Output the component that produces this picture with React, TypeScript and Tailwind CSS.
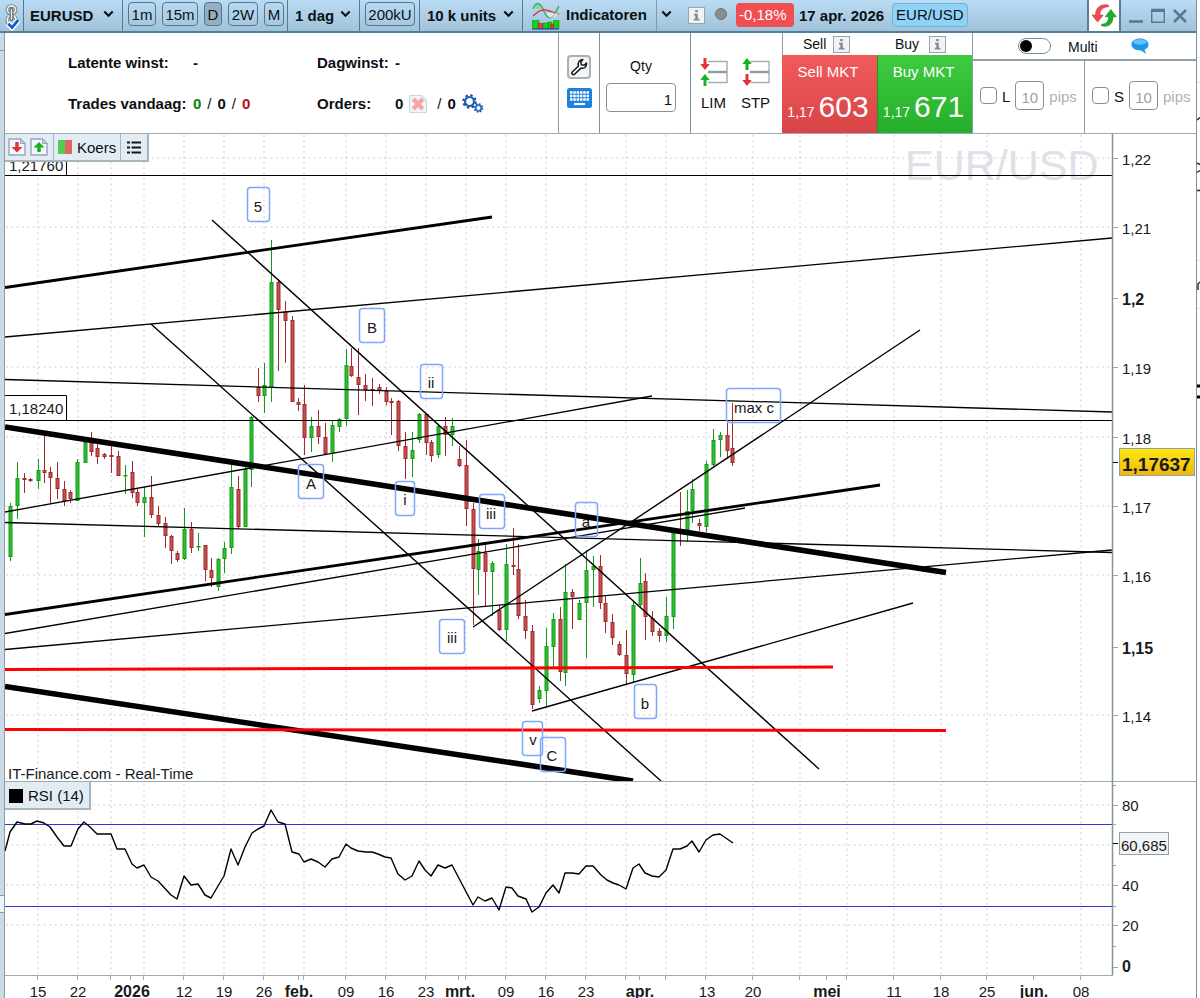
import React from "react";

type Candle = [x: number, high: number, low: number, top: number, bottom: number, up: 0 | 1];

const candles: Candle[] = [
  [10, 503, 561, 506, 557, 1], [17, 462, 519, 478, 506, 1], [24, 473, 493, 478, 480, 0], [30, 478, 482, 479, 481, 0],
  [38, 459, 489, 470, 481, 1], [44, 435, 483, 470, 473, 0], [50, 467, 503, 472, 478, 0], [57, 462, 499, 478, 489, 0],
  [64, 481, 506, 489, 501, 0], [70, 490, 503, 492, 499, 0], [77, 459, 501, 462, 501, 1], [85, 441, 463, 442, 463, 1],
  [91, 432, 456, 442, 452, 0], [97, 444, 464, 448, 457, 0], [104, 453, 459, 454, 457, 0], [111, 445, 473, 455, 457, 0],
  [118, 451, 476, 456, 476, 0], [125, 465, 494, 475, 476, 1], [132, 461, 498, 472, 493, 0], [137, 488, 506, 492, 503, 0],
  [144, 487, 537, 497, 503, 1], [151, 476, 518, 497, 515, 0], [158, 506, 526, 515, 524, 0], [165, 517, 548, 523, 536, 0],
  [171, 535, 564, 536, 551, 0], [177, 551, 562, 553, 560, 0], [184, 508, 560, 529, 559, 1], [191, 522, 553, 529, 548, 0],
  [198, 533, 551, 546, 547, 1], [205, 545, 581, 545, 570, 0], [211, 558, 587, 570, 578, 0], [218, 558, 591, 559, 587, 1],
  [224, 542, 573, 548, 559, 1], [231, 463, 554, 487, 548, 1], [238, 476, 529, 489, 527, 0], [245, 467, 527, 469, 527, 1],
  [251, 416, 487, 417, 470, 1], [258, 368, 402, 387, 396, 0], [264, 363, 413, 385, 396, 1], [271, 240, 402, 282, 387, 1],
  [278, 279, 371, 282, 310, 0], [285, 301, 363, 312, 321, 0], [292, 316, 402, 320, 402, 0], [298, 398, 411, 402, 405, 0],
  [304, 385, 455, 404, 438, 0], [311, 417, 452, 426, 438, 1], [318, 410, 444, 426, 437, 0], [325, 423, 454, 437, 454, 0],
  [332, 420, 462, 425, 454, 1], [339, 418, 432, 419, 427, 1], [346, 349, 426, 365, 419, 1], [351, 348, 377, 366, 376, 0],
  [358, 348, 415, 377, 385, 0], [365, 374, 401, 385, 390, 0], [372, 378, 406, 389, 391, 0], [379, 384, 394, 387, 390, 0],
  [386, 387, 405, 391, 402, 0], [391, 398, 435, 401, 403, 0], [398, 400, 451, 401, 446, 0], [405, 432, 479, 446, 459, 0],
  [412, 432, 477, 450, 459, 1], [419, 413, 443, 414, 440, 1], [426, 413, 455, 414, 443, 0], [431, 440, 462, 442, 456, 0],
  [438, 425, 458, 426, 455, 1], [445, 417, 456, 426, 435, 0], [452, 418, 446, 426, 435, 1], [459, 446, 467, 459, 466, 0],
  [466, 440, 526, 465, 509, 0], [473, 503, 625, 509, 569, 0], [478, 539, 595, 551, 570, 1], [485, 544, 606, 553, 572, 0],
  [492, 561, 616, 563, 572, 1], [499, 605, 631, 610, 630, 0], [506, 544, 641, 564, 630, 1], [513, 528, 575, 565, 567, 0],
  [518, 544, 619, 569, 616, 0], [525, 600, 639, 616, 631, 0], [532, 625, 709, 631, 705, 0], [539, 686, 703, 690, 699, 1],
  [546, 628, 706, 646, 691, 1], [553, 613, 669, 619, 647, 1], [560, 607, 681, 619, 672, 0], [565, 564, 686, 592, 673, 1],
  [572, 589, 629, 592, 597, 0], [579, 600, 620, 603, 620, 1], [586, 550, 658, 570, 603, 1], [593, 556, 607, 566, 570, 1],
  [600, 555, 609, 566, 603, 0], [605, 596, 633, 603, 622, 0], [612, 614, 645, 622, 638, 0], [619, 641, 656, 644, 655, 0],
  [626, 630, 685, 655, 674, 0], [633, 602, 682, 605, 675, 1], [640, 558, 607, 583, 605, 1], [645, 573, 640, 581, 617, 0],
  [652, 611, 636, 618, 632, 0], [659, 628, 642, 631, 636, 0], [666, 597, 642, 616, 636, 1], [673, 531, 629, 533, 617, 1],
  [680, 492, 546, 531, 534, 0], [687, 490, 542, 511, 530, 1], [692, 479, 523, 489, 511, 1], [699, 519, 531, 523, 526, 0],
  [706, 461, 532, 464, 527, 1], [713, 429, 467, 440, 465, 1], [720, 432, 457, 435, 440, 1], [727, 423, 459, 435, 451, 0],
  [732, 403, 466, 448, 463, 0],
];

// x1, y1, x2, y2, stroke width, colour
const trendLines: [number, number, number, number, number, string][] = [
  [5, 175.5, 1112, 175.5, 1, "#000"],
  [5, 420.5, 1112, 420.5, 1, "#000"],
  [5, 287.5, 492, 217, 2.8, "#000"],
  [5, 337, 1112, 238, 1.3, "#000"],
  [5, 379.5, 1112, 412, 1.3, "#000"],
  [5, 427, 946, 572.5, 5.6, "#000"],
  [5, 512, 652, 396, 1.3, "#000"],
  [5, 522.5, 1112, 552.5, 1.3, "#000"],
  [5, 614.5, 880, 485, 2.8, "#000"],
  [5, 633.5, 745, 508, 1.3, "#000"],
  [5, 649.5, 1112, 550, 1.3, "#000"],
  [5, 686.5, 633, 781, 5.6, "#000"],
  [212, 220, 819, 769, 1.4, "#000"],
  [151, 324, 661, 781, 1.4, "#000"],
  [473, 627, 920, 330, 1.4, "#000"],
  [532, 711, 913, 603, 1.3, "#000"],
  [5, 669.5, 833, 667, 3, "#f00"],
  [5, 729.5, 946, 730.5, 3, "#f00"],
];

// text, box x, box y, box width, text x, baseline
const waves: [string, number, number, number, number, number][] = [
  ["5", 247, 187, 22, 258, 212],
  ["B", 359, 308, 25, 372, 333],
  ["ii", 420, 364, 22, 431, 388],
  ["A", 298, 464, 25, 311, 489],
  ["i", 395, 481, 19, 405, 505],
  ["iii", 479, 494, 25, 491, 519],
  ["a", 575, 502, 22, 586, 527],
  ["iii", 439, 619, 25, 452, 643],
  ["b", 634, 684, 22, 645, 709],
  ["v", 522, 721, 20, 533, 745],
  ["C", 540, 737, 25, 552, 761],
  ["max c", 726, 388, 54, 754, 413],
];

const gridX = [38, 78, 111, 144, 184, 224, 264, 304, 346, 386, 426, 466, 506, 546, 586, 626, 666, 706, 753, 800, 847, 894, 941, 987, 1081];
const gridY = [158, 227, 367, 437, 506, 575, 715];

const prices: [string, number, boolean][] = [
  ["1,22", 158, false], ["1,21", 227, false], ["1,2", 298, true], ["1,19", 367, false], ["1,18", 437, false],
  ["1,17", 506, false], ["1,16", 575, false], ["1,15", 647, true], ["1,14", 715, false],
];

const times: [string, number, boolean][] = [
  ["15", 38, false], ["22", 78, false], ["2026", 132, true], ["12", 184, false], ["19", 224, false], ["26", 264, false],
  ["feb.", 299, true], ["09", 346, false], ["16", 386, false], ["23", 426, false], ["mrt.", 460, true], ["09", 506, false],
  ["16", 546, false], ["23", 586, false], ["apr.", 640, true], ["13", 707, false], ["20", 753, false], ["mei", 827, true],
  ["11", 894, false], ["18", 941, false], ["25", 987, false], ["jun.", 1034, true], ["08", 1081, false],
];
const timeTicks = [38, 78, 111, 131, 144, 184, 224, 264, 299, 304, 346, 386, 426, 459, 466, 506, 546, 586, 626, 640, 666, 706, 753, 800, 827, 847, 894, 941, 987, 1034, 1081];

const rsi =
  "5,851 10,832 17,822 25,824 31,824 37,821 44,823 50,827 57,837 64,846 71,846 78,829 84,822 90,827 97,834 111,834 117,849 125,849 132,864 137,868 144,865 151,877 158,881 171,895 177,899 184,876 191,885 198,884 205,895 211,898 218,886 224,876 231,849 238,865 245,847 252,833 258,829 264,826 271,810 278,822 285,824 292,852 299,854 304,862 311,859 318,862 325,867 332,859 339,857 346,844 351,848 358,851 366,852 372,852 378,854 385,857 391,858 398,874 405,880 412,876 419,861 425,870 431,876 438,865 445,868 452,865 473,905 478,897 485,901 492,898 499,910 506,887 512,888 518,896 526,899 532,912 539,907 546,893 553,885 559,893 565,873 572,873 579,874 586,866 593,866 601,875 607,880 613,883 619,885 626,889 633,868 639,864 645,873 652,876 659,877 666,870 673,849 680,849 687,846 692,841 699,852 706,840 713,835 720,834 733,843";

const SANS = "font-['Liberation_Sans',Arial,sans-serif]";

function Chevron() {
  return (
    <svg width="11" height="8" viewBox="0 0 11 8" fill="none" aria-hidden="true">
      <path d="M1.3 1.6 5.5 5.8 9.7 1.6" stroke="#0b1218" strokeWidth="2.1" />
    </svg>
  );
}

function Picker({ label, value, className }: { label: string; value: string; className: string }) {
  return (
    <div className={`relative flex h-full shrink-0 items-center border-r border-[#54788f] ${className}`}>
      <select aria-label={label} defaultValue={value} className="h-full w-full appearance-none bg-transparent font-bold outline-none">
        <option>{value}</option>
      </select>
      <span className="pointer-events-none absolute right-2 flex pb-1">
        <Chevron />
      </span>
    </div>
  );
}

function Chip({ children, active, className }: { children: string; active?: boolean; className: string }) {
  return (
    <button
      type="button"
      aria-pressed={!!active}
      className={`flex h-6 items-center justify-center rounded-sm border border-[#53768e] pt-[2px] ${active ? "bg-[#94afc0]" : ""} ${className}`}
    >
      {children}
    </button>
  );
}

function InfoButton({ label }: { label: string }) {
  return (
    <button type="button" aria-label={label} className="flex h-[17px] w-[17px] shrink-0 items-center justify-center border border-[#9aa6ad] bg-[#f1f2f3]">
      <svg width="9" height="11" viewBox="0 0 9 11" fill="#7f8b91" aria-hidden="true">
        <path d="M3.2 0h2.6v2.2H3.2zM2 3.8h3.8v5H7.4v1.8H1.8V8.8h1.5V5.4H2z" />
      </svg>
    </button>
  );
}

function LinkIcon() {
  return (
    <svg width="24" height="31" viewBox="0 0 24 31" fill="none" aria-hidden="true">
      <g stroke="#6f787e" strokeWidth="3.6">
        <rect x="7.700" y="5.500" width="8.600" height="8" rx="4" />
        <path d="M9 16.500c-2 2-2 7 1.500 8.500M15 16.500c1.500 1.500 1.800 3.500 1.200 5" />
      </g>
      <g stroke="#eef1f2" strokeWidth="1.800">
        <rect x="7.700" y="5.500" width="8.600" height="8" rx="4" />
        <path d="M9 16.500c-2 2-2 7 1.500 8.500M15 16.500c1.500 1.500 1.800 3.500 1.200 5" />
      </g>
      <path d="M12 9.500v10" stroke="#596269" strokeWidth="3.800" strokeLinecap="round" />
      <path d="M12 9.500v10" stroke="#e9edef" strokeWidth="1.600" strokeLinecap="round" />
      <path d="m8 23.500 4.500 4.500L19 20.400" stroke="#fff" strokeWidth="5.800" />
      <path d="m8.600 24 4 4L19 20.400" stroke="#1757d6" strokeWidth="3" />
    </svg>
  );
}

function IndicatorIcon() {
  return (
    <svg width="28" height="28" viewBox="0 0 28 28" fill="none" aria-hidden="true">
      <path d="M1 7C4-1 8 1 11 7c3 8 6 10 9 8 3-2 4-6 7-11" stroke="#3cab4b" strokeWidth="1.4" />
      <path d="M1 7C4 0 8 2 10 7z" fill="#83cf93" opacity=".7" />
      <path d="M1 14C6 9 10 7 14 8c5 1 8 3 13 4" stroke="#d6323e" strokeWidth="1.3" />
      <path d="M14 11l13 0-4 4-5 1z" fill="#fff" opacity=".5" />
      <path d="M.5 18.500h6.500v8H.5zM11 21h5v5.500h-5zM16 20h4v6.500h-4zM21.500 18.500H27v8h-5.500z" fill="#0ed413" stroke="#0d8a16" strokeWidth=".6" />
      <path d="M6.500 21.500h4v5h-4zM18.500 22.500h3v4h-3z" fill="#ee3a3f" stroke="#a8161c" strokeWidth=".6" />
      <path d="M0 27h27" stroke="#1d4fb4" strokeWidth="1.2" />
    </svg>
  );
}

function RefreshIcon() {
  return (
    <svg width="26" height="24" viewBox="0 0 26 24" aria-hidden="true">
      <path d="M17.500 1.200C10-.8 4.500 3.500 4.600 11H1l5.600 7L12.200 11H8.800C8.600 6.500 12 2.600 17.500 2.800z" fill="#ee4c52" stroke="#cf2d35" strokeWidth=".6" />
      <path d="M10.500 21.800c7.500 2 11.500-2.400 11.600-9h3.300L19.800 5.600 14.200 12.800h3.400c.2 4.500-2.400 7.600-7.100 7.400z" fill="#22ad2b" stroke="#128a1c" strokeWidth=".6" />
    </svg>
  );
}

function Toolbar() {
  return (
    <header className="flex h-[33px] items-center overflow-hidden border-b-2 border-[#587d96] bg-linear-to-b from-[#b9dbf3] to-[#a1c3da]">
      <button type="button" aria-label="Link" className="flex h-full w-6 shrink-0 items-center justify-center border-r border-[#54788f]">
        <LinkIcon />
      </button>
      <Picker label="Symbol" value="EURUSD" className="w-[99px] pl-[6px]" />
      <div className="flex h-full w-[165px] shrink-0 items-center gap-[6px] border-r border-[#54788f] pb-[3px] pl-[5px]">
        <Chip className="w-[28px]">1m</Chip>
        <Chip className="w-[36px]">15m</Chip>
        <Chip active className="w-[18px]">D</Chip>
        <Chip className="w-[30px]">2W</Chip>
        <Chip className="w-[20px]">M</Chip>
      </div>
      <Picker label="Periode" value="1 dag" className="w-[72px] pl-[7px]" />
      <div className="flex h-full w-[60px] shrink-0 items-center border-r border-[#54788f] pb-[3px] pl-[5px]">
        <Chip className="w-[50px]">200kU</Chip>
      </div>
      <Picker label="Eenheden" value="10 k units" className="w-[103px] pl-[7px]" />
      <button type="button" className="flex h-full w-[134px] shrink-0 items-center gap-[6px] border-r border-[#8199a8] pl-[9px] font-bold">
        <IndicatorIcon />
        <span className="pb-[2px]">Indicatoren</span>
      </button>
      <button type="button" aria-label="Indicatoren menu" className="flex h-full w-[31px] shrink-0 items-center pb-1 pl-1">
        <Chevron />
      </button>
      <InfoButton label="Info" />
      <span className="mb-1 ml-[10px] h-3 w-3 shrink-0 rounded-full border border-[#6f7577] bg-[#8b8b8b]" />
      <span className="mb-[2px] ml-[9px] flex h-6 w-[58px] shrink-0 items-center rounded-sm bg-[#f04e50] pl-[3px] text-white">-0,18%</span>
      <span className="ml-[5px] shrink-0 whitespace-nowrap font-bold">17 apr. 2026</span>
      <button type="button" className="mb-[2px] ml-2 flex h-6 w-[76px] shrink-0 items-center rounded-sm border border-[#76b2d8] bg-[#90d2f6] pl-[3px]">
        EUR/USD
      </button>
      <button type="button" aria-label="Vernieuwen" className="ml-auto flex h-full w-[34px] shrink-0 items-center justify-center border-x-2 border-[#587d96] bg-white">
        <RefreshIcon />
      </button>
      <div className="flex h-full w-[75px] shrink-0 items-center gap-2 pl-2">
        <button type="button" aria-label="Minimaliseren">
          <svg width="14" height="16" viewBox="0 0 14 16" aria-hidden="true"><path d="M0 13.500h14" stroke="#557a93" strokeWidth="2.600" /></svg>
        </button>
        <button type="button" aria-label="Maximaliseren">
          <svg width="14" height="16" viewBox="0 0 14 16" fill="none" aria-hidden="true">
            <path d="M.7 1.500h12.600v12.700H.7z" stroke="#557a93" strokeWidth="1.400" />
            <path d="M0 2.500h14" stroke="#557a93" strokeWidth="3" />
          </svg>
        </button>
        <button type="button" aria-label="Sluiten">
          <svg width="14" height="16" viewBox="0 0 14 16" aria-hidden="true"><path d="M1 2l12 12M13 2 1 14" stroke="#557a93" strokeWidth="2.600" /></svg>
        </button>
      </div>
    </header>
  );
}

function ArrowLevels({ first }: { first: "down" | "up" }) {
  const down = "M3.500 0h3v6h3.200L5 12 .3 6h3.200z";
  const up = "M5 0 9.700 6H6.500v6h-3V6H.3z";
  return (
    <svg width="28" height="28" viewBox="0 0 28 28" fill="none" aria-hidden="true">
      <path d="M8 3.500h19v21H8" stroke="#a3afb0" strokeWidth="1.400" />
      <path d="M8 14h19" stroke="#8d9b9c" strokeWidth="2.400" />
      <path d={first === "down" ? down : up} fill={first === "down" ? "#e33238" : "#19b322"} />
      <path transform="translate(0 16)" d={first === "down" ? up : down} fill={first === "down" ? "#19b322" : "#e33238"} />
    </svg>
  );
}

function PriceButton({ side, pips, className }: { side: string; pips: string; className: string }) {
  return (
    <button type="button" className={`flex h-[78px] w-full flex-col items-center pr-[3px] text-white ${className}`}>
      <span className="pt-2 leading-[18px]">{side} MKT</span>
      <span className="mt-[10px] flex items-baseline gap-1 leading-[32px]">
        <span className="text-sm">1,17</span>
        <span className="text-[30px]">{pips}</span>
      </span>
    </button>
  );
}

function PipsCell({ id, className }: { id: string; className: string }) {
  return (
    <div className={`flex flex-1 items-center gap-[5px] pb-1 pl-[7px] ${className}`}>
      <input id={`use-${id}`} type="checkbox" className="h-[17px] w-[17px] shrink-0 appearance-none rounded-sm border border-[#7d8f97] bg-white" />
      <label htmlFor={`use-${id}`} className="pt-1">{id}</label>
      <input aria-label={`${id} pips`} defaultValue="10" className="h-[29px] w-[29px] shrink-0 rounded-sm border border-[#82939b] pt-1 text-center text-[#9a9fa3]" />
      <span className="pt-1 text-[#adb1b4]">pips</span>
    </div>
  );
}

function TradePanel() {
  return (
    <section className="flex h-[100px] bg-white">
      <div className="grid min-w-0 flex-1 grid-cols-[125px_124px_78px_auto] grid-rows-[41px_41px] items-center pl-[63px] pt-[9px] font-bold">
        <span className="whitespace-nowrap">Latente winst:</span>
        <span>-</span>
        <span className="whitespace-nowrap">Dagwinst:</span>
        <span>-</span>
        <span className="whitespace-nowrap">Trades vandaag:</span>
        <span className="flex gap-[6px]">
          <span className="text-[#0b7d12]">0</span>
          <span className="font-normal">/</span>
          <span>0</span>
          <span className="font-normal">/</span>
          <span className="text-[#b00f12]">0</span>
        </span>
        <span>Orders:</span>
        <span className="flex items-center">
          0
          <button type="button" aria-label="Orders annuleren" className="ml-[6px]">
            <svg width="18" height="18" viewBox="0 0 18 18" aria-hidden="true">
              <path d="M.5.5h12.500l4.500 4.500v12.500H.5z" fill="#eef3f7" stroke="#cdd9e2" />
              <path d="M13 .5v4.500h4.500" fill="#dbe5ec" stroke="#cdd9e2" />
              <path d="m3 5.500 3-2.700 3 3.200 3-3.200 3 2.700L11.800 9l3.200 3.500-3 2.700L9 12l-3 3.200-3-2.700L6.200 9z" fill="#f7a2a4" />
            </svg>
          </button>
          <span className="ml-[10px] mr-[6px] font-normal">/</span>0
          <button type="button" aria-label="Instellingen" className="ml-[6px]">
            <svg width="22" height="19" viewBox="0 0 22 19" fill="none" aria-hidden="true">
              <circle cx="7.500" cy="7.500" r="6.200" stroke="#164f9f" strokeWidth="2" strokeDasharray="2.400 2.470" />
              <circle cx="7.500" cy="7.500" r="4.500" stroke="#1c5cb4" strokeWidth="2.200" />
              <circle cx="16.500" cy="14" r="4" stroke="#164f9f" strokeWidth="1.600" strokeDasharray="1.600 1.540" />
              <circle cx="16.500" cy="14" r="2.800" stroke="#2a6cc4" strokeWidth="1.700" />
            </svg>
          </button>
        </span>
      </div>

      <div className="flex w-[41px] flex-col items-center gap-[9px] border-l border-[#8b9ba4] pt-[22px]">
        <button type="button" aria-label="Gereedschap" className="flex h-6 w-6 items-center justify-center rounded-sm border-2 border-[#a9b0b3] bg-[#f3f4f5]">
          <svg width="18" height="18" viewBox="0 0 18 18" fill="#fff" aria-hidden="true">
            <path d="M2 14.200 8.500 8C7.500 5 9 1.700 12.800 1.600L10.800 4l.6 2.800 2.800.5 2.300-2.200c.5 3.500-2.500 6-5.600 5L4.600 16.300C3 17.300 1 15.600 2 14.200z" stroke="#15191b" strokeWidth="1.500" strokeLinejoin="round" />
          </svg>
        </button>
        <button type="button" aria-label="Toetsenbord">
          <svg width="25" height="20" viewBox="0 0 25 20" aria-hidden="true">
            <rect width="25" height="20" rx="2.500" fill="#1c80dc" />
            <path d="M3 4.500h19M3 8h19M3 11.500h19" stroke="#fff" strokeWidth="2.400" strokeDasharray="2.500 .8" />
            <path d="M7 16h11" stroke="#fff" strokeWidth="2.200" />
          </svg>
        </button>
      </div>

      <div className="flex w-[91px] flex-col items-center border-l border-[#7f919b] pr-2 pt-6 text-sm">
        <label htmlFor="qty" className="leading-[18px]">Qty</label>
        <input id="qty" defaultValue="1" className="mt-2 h-[29px] w-[70px] rounded-sm border border-[#82939b] pr-[3px] pt-1 text-right text-[15px]" />
      </div>

      <div className="flex w-[92px] justify-center gap-[14px] border-l border-[#7f919b] pr-1 pt-[25px]">
        <button type="button" className="flex w-7 flex-col items-center gap-[7px]">
          <ArrowLevels first="down" />
          <span className="leading-5">LIM</span>
        </button>
        <button type="button" className="flex w-7 flex-col items-center gap-[7px]">
          <ArrowLevels first="up" />
          <span className="leading-5">STP</span>
        </button>
      </div>

      <div className="w-[95px]">
        <div className="flex h-[22px] items-center gap-[7px] border-l border-[#8b9ba4] pl-5 text-sm">
          Sell <InfoButton label="Info Sell" />
        </div>
        <PriceButton side="Sell" pips="603" className="bg-linear-to-b from-[#f05a5c] to-[#d94447]" />
      </div>
      <div className="w-[95px]">
        <div className="flex h-[22px] items-center gap-[10px] pl-[18px] text-sm">
          Buy <InfoButton label="Info Buy" />
        </div>
        <PriceButton side="Buy" pips="671" className="border-l border-[#1f9a28] bg-linear-to-b from-[#3ecb40] to-[#25ae2b]" />
      </div>

      <div className="flex w-[224px] flex-col border-l border-[#8b9ba4] text-sm">
        <div className="flex h-[28px] items-center border-b-2 border-[#93a1a8] pl-[45px]">
          <input
            id="multi"
            type="checkbox"
            role="switch"
            className="flex h-4 w-[33px] appearance-none items-center rounded-full border border-[#7f8b90] bg-white before:ml-[1px] before:block before:h-3 before:w-3 before:rounded-full before:bg-black"
          />
          <label htmlFor="multi" className="ml-[17px] pt-[2px]">Multi</label>
          <button type="button" aria-label="Chat" className="ml-[33px]">
            <svg width="18" height="17" viewBox="0 0 18 17" aria-hidden="true">
              <path d="M9 .5c5 0 8.500 2.500 8.500 6 0 2.800-1.500 4.200-4 5.200l1.500 4.300-5-3.600C4 12.500.5 10 .5 6.500S4 .5 9 .5z" fill="#1b97ea" />
              <ellipse cx="9" cy="4" rx="6.500" ry="2.800" fill="#7cc9f8" opacity=".8" />
            </svg>
          </button>
        </div>
        <div className="flex flex-1 text-[15px]">
          <PipsCell id="L" className="border-r border-[#8b9ba4]" />
          <PipsCell id="S" className="" />
        </div>
      </div>
    </section>
  );
}

function Doc({ up }: { up?: boolean }) {
  return (
    <svg width="18" height="18" viewBox="0 0 18 18" aria-hidden="true">
      <path d="M1 1h11.500l4.500 4.500V17H1z" fill="#f5f8fa" stroke="#8fa9c0" strokeWidth="1.400" />
      <path d="M12.500 1v4.500H17z" fill="#c6d6e4" stroke="#8fa9c0" />
      {up ? (
        <path d="M9 4l5.500 5.500h-3.800V14H7.300V9.500H3.500z" fill="#17b01f" />
      ) : (
        <path d="M9 14.500 3.500 9h3.800V4h3.400v5h3.800z" fill="#e0343a" />
      )}
    </svg>
  );
}

function PricePanel() {
  return (
    <section className="relative">
      <svg viewBox="5 133 1191 649" className="block h-auto w-full" fontSize="15" fill="#17191c" role="img" aria-label="EUR/USD koers">
        <g stroke="#dcdce6" strokeWidth="1.600" strokeDasharray="1.800 3.600">
          {gridX.map((x) => <path key={x} d={`M${x} 135V781`} />)}
          {gridY.map((y) => <path key={y} d={`M6 ${y}H1111`} />)}
        </g>
        <text x="905" y="180" fontSize="43" fill="#e0e1e8">EUR/USD</text>
        {candles.map(([x, high, low, top, bottom, up]) => (
          <g key={x} stroke={up ? "#149a1b" : "#a02a2c"} fill={up ? "#2fbf32" : "#c45052"}>
            <path d={`M${x + 0.5} ${high}V${low}`} />
            <rect x={x - 1} y={top + 0.5} width="3" height={Math.max(bottom - top - 1, 0.5)} />
          </g>
        ))}
        <g fill="#fff" stroke="#000">
          <path d="M5 153.500H66.500V175.500H5" />
          <path d="M5 395.500H66.500V420.500H5" />
        </g>
        <text x="9" y="171">1,21760</text>
        <text x="9" y="414">1,18240</text>
        {waves.map(([t, , , , x, y]) => <text key={`${t}${x}`} x={x} y={y} textAnchor="middle">{t}</text>)}
        {trendLines.map(([x1, y1, x2, y2, w, c], i) => (
          <line key={i} x1={x1} y1={y1} x2={x2} y2={y2} strokeWidth={w} stroke={c} />
        ))}
        {waves.map(([t, x, y, w]) => (
          <rect key={`${t}${x}`} x={x + 0.500} y={y + 0.500} width={w} height="34" rx="3" fill="none" stroke="#7da7fb" strokeWidth="1.500" />
        ))}
        <text x="8" y="779">IT-Finance.com - Real-Time</text>
        <path d="M5 133.500H1196M5 781.500H1196" stroke="#9aabb3" />
        <path d="M1112.500 134V782" stroke="#83939c" strokeWidth="1.500" />
        {prices.map(([t, y, bold]) => (
          <g key={t}>
            <path d={`M1113 ${y + 0.5}h5`} stroke="#9aa7ae" />
            <text x="1122" y={y + 7} fontSize={bold ? 16 : 15} fontWeight={bold ? 700 : 400}>{t}</text>
          </g>
        ))}
        <path d="M1113 462.500h5" stroke="#000" />
        <defs>
          <linearGradient id="gold" x1="0" y1="0" x2="0" y2="1">
            <stop offset="0" stopColor="#ffe815" />
            <stop offset="1" stopColor="#f0b70c" />
          </linearGradient>
        </defs>
        <rect x="1119.500" y="448.500" width="75" height="27" fill="url(#gold)" stroke="#8fa0ab" />
        <text x="1122" y="471" fontSize="19" fontWeight="700">1,17637</text>
      </svg>
      <div className="absolute left-0 top-px flex h-7 items-center border-b-2 border-r-2 border-[#a7b5bf] bg-[#e3ecf2]">
        <button type="button" aria-label="Verkopen" className="pl-[3px]"><Doc /></button>
        <button type="button" aria-label="Kopen" className="pl-1 pr-[5px]"><Doc up /></button>
        <button type="button" className="flex h-full items-center gap-[5px] border-x border-[#a7b5bf] px-1">
          <span className="flex h-[14px] w-[14px]">
            <span className="flex-1 bg-[#50ce52]" />
            <span className="flex-1 bg-[#df6466]" />
          </span>
          <span className="pt-[2px]">Koers</span>
        </button>
        <button type="button" aria-label="Lijst" className="px-[6px]">
          <svg width="14" height="13" viewBox="0 0 14 13" aria-hidden="true">
            <path d="M0 1.500h3M0 6.500h3M0 11.500h3M4.500 1.500H14M4.500 6.500H14M4.500 11.500H14" stroke="#15191c" strokeWidth="1.800" />
          </svg>
        </button>
      </div>
    </section>
  );
}

function RsiPanel() {
  return (
    <section className="relative">
      <svg viewBox="5 782 1191 193" className="block h-auto w-full" fontSize="15" fill="#17191c" role="img" aria-label="RSI (14)">
        <g stroke="#dcdce6" strokeWidth="1.600" strokeDasharray="1.800 3.600">
          {gridX.map((x) => <path key={x} d={`M${x} 784V974`} />)}
          {[805, 845, 885, 925].map((y) => <path key={y} d={`M6 ${y}H1111`} />)}
        </g>
        <path d="M5 824.500H1112M5 906.500H1112" stroke="#3434d8" />
        <polyline points={rsi} fill="none" stroke="#000" strokeWidth="1.400" strokeLinejoin="round" />
        <path d="M1112.500 782V975" stroke="#83939c" strokeWidth="1.500" />
        <path d="M1113 785.500h3M1113 805.500h5M1113 824.500h3M1113 865.500h3M1113 885.500h5M1113 906.500h3M1113 925.500h5M1113 946.500h3M1113 967.500h5" stroke="#9aa7ae" />
        <path d="M1113 843.500h5" stroke="#000" />
        <rect x="1119.500" y="832.500" width="49" height="22" fill="#f3f4f6" stroke="#8fa0ab" />
        <text x="1122" y="811">80</text>
        <text x="1121" y="851">60,685</text>
        <text x="1122" y="891">40</text>
        <text x="1122" y="931">20</text>
        <text x="1122" y="972" fontSize="16" fontWeight="700">0</text>
      </svg>
      <button type="button" className="absolute left-0 top-0 flex h-7 items-center gap-[5px] border-b-2 border-r-2 border-[#a7b5bf] bg-[#e3ecf2] pl-1 pr-[5px] pt-[2px]">
        <span className="h-[14px] w-[14px] bg-black" />
        RSI (14)
      </button>
    </section>
  );
}

function TimeAxis() {
  return (
    <svg viewBox="5 975 1191 23" className="block h-auto w-full overflow-visible" fontSize="15" fill="#17191c" role="img" aria-label="Tijdas">
      <path d="M5 975.500H1113" stroke="#9aabb3" />
      {timeTicks.map((x) => <path key={x} d={`M${x - 0.500} 976v4`} stroke="#9aabb3" />)}
      {times.map(([t, x, bold]) => (
        <text key={x} x={x} y="997" textAnchor="middle" fontSize={bold ? 16 : 15} fontWeight={bold ? 700 : 400}>{t}</text>
      ))}
    </svg>
  );
}

// The neighbouring window, of which a three-pixel edge shows.
function NeighbourEdge() {
  return (
    <svg width="3" height="400" viewBox="0 0 3 400" className="block" fill="none" aria-hidden="true">
      <path d="M0 57.500h3M0 82.500h3M0 260.500h3M0 308.500h3" stroke="#dfe3ea" />
      <path d="M0 120l3-2.500M0 163l3 1.500M0 172.500l3-2M0 190.500h3M1 290v-6l2-2" stroke="#22262a" strokeWidth="1.400" />
      <path d="M0 386h3M0 397h3" stroke="#000" strokeWidth="3" />
    </svg>
  );
}

export default function App() {
  return (
    <div className={`flex w-full overflow-hidden bg-white text-[15px] leading-5 text-[#0d0f12] ${SANS}`}>
      <div className="flex min-w-0 flex-1 flex-col">
        <Toolbar />
        <div className="flex">
          <div className="flex w-[5px] shrink-0 flex-col border-r border-[#8a9ca6] bg-[#c9dbe6]">
            <div className="h-[18px] border-b border-[#8a9ca6]" />
            <div className="flex-1" />
            <div className="h-[18px] border-y border-[#8a9ca6] bg-[#eef5f9]" />
            <div className="h-[85px]" />
          </div>
          <main className="min-w-0 flex-1">
            <TradePanel />
            <PricePanel />
            <RsiPanel />
            <TimeAxis />
          </main>
        </div>
      </div>
      <div className="w-1 shrink-0 border-l border-[#7b909c]">
        <NeighbourEdge />
      </div>
    </div>
  );
}
